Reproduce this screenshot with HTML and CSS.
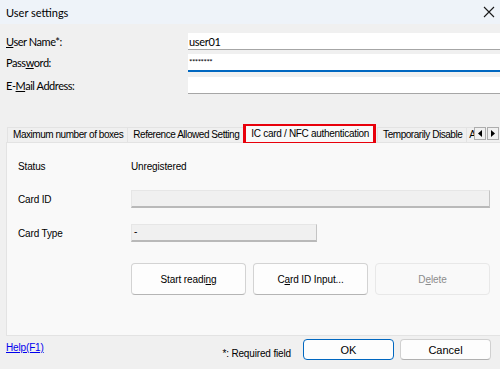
FILE: index.html
```html
<!DOCTYPE html>
<html>
<head>
<meta charset="utf-8">
<link rel="stylesheet" href="styles.css">
</head>
<body>
<div class="window">
  <div class="titlebar">
    <span class="title">User settings</span>
    <svg class="close" width="12" height="12" viewBox="0 0 12 12"><path d="M1 1 L11 11 M11 1 L1 11" stroke="#1a1a1a" stroke-width="1.1" fill="none"/></svg>
  </div>
  <div class="form">
    <label class="lbl"><u>U</u>ser Name*:</label>
    <div class="field"><input class="input" value="user01"></div>
    <label class="lbl">Pass<u>w</u>ord:</label>
    <div class="field"><input class="input focus" value="********"></div>
    <label class="lbl">E-<u>M</u>ail Address:</label>
    <div class="field"><input class="input" value=""></div>
  </div>
  <div class="tabstrip">
    <div class="tabs">
      <div class="tab">Maximum number of boxes</div>
      <div class="tab">Reference Allowed Setting</div>
      <div class="tab active">IC card / NFC authentication</div>
      <div class="tab">Temporarily Disable</div>
      <div class="tab last">A</div>
    </div>
    <div class="scroll">
      <div class="sbtn"><svg width="4" height="7" viewBox="0 0 4 7"><path d="M4 0 L0 3.5 L4 7 Z" fill="#000"/></svg></div>
      <div class="sbtn"><svg width="4" height="7" viewBox="0 0 4 7"><path d="M0 0 L4 3.5 L0 7 Z" fill="#000"/></svg></div>
    </div>
  </div>
  <div class="panel">
    <div class="prow status"><span class="plbl">Status</span><span class="pval">Unregistered</span></div>
    <div class="prow"><span class="plbl">Card ID</span><div class="rofield wide"></div></div>
    <div class="prow"><span class="plbl">Card Type</span><div class="rofield narrow">-</div></div>
    <div class="actions">
      <button class="btn">Start readi<u>n</u>g</button>
      <button class="btn">C<u>a</u>rd ID Input...</button>
      <button class="btn disabled">D<u>e</u>lete</button>
    </div>
  </div>
  <div class="footer">
    <a class="help">Help(F1)</a>
    <span class="req">*: Required field</span>
    <button class="dbtn ok">OK</button>
    <button class="dbtn">Cancel</button>
  </div>
</div>
</body>
</html>
```
FILE: styles.css
```css
html, body {
  margin: 0;
  padding: 0;
}
body {
  width: 500px;
  height: 369px;
  overflow: hidden;
  background: #f0f0f0;
  font-family: "Liberation Sans", Arial, sans-serif;
  font-size: 10px;
  letter-spacing: -0.15px;
  color: #000;
}
.window {
  width: 500px;
  height: 369px;
  display: flex;
  flex-direction: column;
  overflow: hidden;
}
.titlebar {
  height: 24px;
  flex: none;
  background: #eef3f9;
  display: flex;
  align-items: center;
  justify-content: space-between;
  padding: 0 5px 0 6px;
  font-family: "Lato", sans-serif;
  font-size: 11px;
  letter-spacing: 0;
  color: #000;
}
.form {
  display: grid;
  grid-template-columns: 182px 1fr;
  grid-template-rows: 21px 23px 17px;
  padding: 9px 0 0 6px;
  font-family: "Lato", sans-serif;
  font-size: 11px;
  letter-spacing: -0.45px;
}
.lbl {
  align-self: start;
  line-height: 17px;
}
.field {
  align-self: start;
}
.input {
  display: block;
  box-sizing: border-box;
  width: 330px;
  height: 17px;
  margin: 0;
  padding: 0 1px;
  border: none;
  border-bottom: 1px solid #a6a6a6;
  background: #fff;
  font-family: "Lato", sans-serif;
  font-size: 11px;
  letter-spacing: -0.3px;
  color: #000;
  outline: none;
}
.input.focus {
  height: 18px;
  border-bottom: 2px solid #0067c0;
  font-size: 8px;
  letter-spacing: -0.5px;
}
.tabstrip {
  margin-top: 30px;
  height: 19px;
  display: flex;
  align-items: flex-end;
  padding-left: 6px;
  position: relative;
  z-index: 2;
}
.tabs {
  flex: 1;
  display: flex;
  align-items: flex-end;
  overflow: hidden;
  height: 19px;
  padding-left: 1px;
}
.tab {
  flex: none;
  box-sizing: border-box;
  height: 15px;
  margin-bottom: 1px;
  padding: 0 4px 0 5px;
  line-height: 14px;
  border: 1px solid #e3e3e3;
  border-bottom: none;
  background: #f0f0f0;
  white-space: nowrap;
  margin-right: -1px;
  letter-spacing: -0.45px;
}
.tab.active {
  height: 18px;
  margin: 0 3px 0 2px;
  padding: 1px 4px 0 5px;
  background: #f9f9f9;
  outline: 3px solid #e8000b;
  outline-offset: -1px;
  position: relative;
  z-index: 3;
  letter-spacing: -0.3px;
}
.tab.last {
  padding: 0 0 0 2px;
  border-right: none;
}
.scroll {
  flex: none;
  display: flex;
  gap: 1px;
  align-self: flex-start;
  margin-top: 3px;
  margin-right: 1px;
}
.sbtn {
  width: 12px;
  height: 13px;
  box-sizing: border-box;
  border: 1px solid #adadad;
  background: #f0f0f0;
  display: flex;
  align-items: center;
  justify-content: center;
}
.panel {
  flex: none;
  height: 194px;
  box-sizing: border-box;
  margin-left: 6px;
  width: 500px;
  margin-top: -1px;
  background: #f9f9f9;
  border: 1px solid #e3e3e3;
  padding: 14px 0 0 11px;
  display: flex;
  flex-direction: column;
}
.prow {
  display: flex;
  align-items: center;
  height: 18px;
  margin-bottom: 16px;
}
.prow.status {
  margin-bottom: 15px;
}
.plbl {
  width: 113px;
  flex: none;
}
.rofield {
  box-sizing: border-box;
  height: 18px;
  background: #f0f0f0;
  border: 1px solid #e6e6e6;
  border-bottom: 2px solid #b9b9b9;
  border-right: 1px solid #c4c4c4;
  padding-left: 2px;
  line-height: 14px;
}
.rofield.wide {
  width: 359px;
}
.rofield.narrow {
  width: 186px;
}
.actions {
  display: flex;
  gap: 7px;
  margin-top: 5px;
  padding-left: 113px;
}
.btn {
  width: 115px;
  height: 32px;
  box-sizing: border-box;
  margin: 0;
  background: #fdfdfd;
  border: 1px solid #d3d3d3;
  border-bottom-color: #b5b5b5;
  border-radius: 4px;
  font-family: "Liberation Sans", Arial, sans-serif;
  font-size: 10px;
  letter-spacing: -0.1px;
  color: #000;
}
.btn.disabled {
  background: #f9f9f9;
  border-color: #e8e8e8;
  color: #8c8c8c;
}
.footer {
  flex: 1;
  display: flex;
  align-items: flex-start;
  padding: 3px 9px 0 6px;
  font-family: "Liberation Sans", Arial, sans-serif;
  font-size: 10px;
}
.help {
  color: #0000ee;
  text-decoration: underline;
  margin-top: 3px;
}
.req {
  margin-left: auto;
  margin-right: 12px;
  margin-top: 9px;
}
.dbtn {
  width: 91px;
  height: 21px;
  box-sizing: border-box;
  margin: 0;
  background: #fdfdfd;
  border: 1px solid #d0d0d0;
  border-bottom-color: #b0b0b0;
  border-radius: 4px;
  font-family: "Liberation Sans", Arial, sans-serif;
  font-size: 11px;
  letter-spacing: 0;
  color: #000;
}
.dbtn.ok {
  border: 1px solid #0067c0;
  margin-right: 6px;
}
```
